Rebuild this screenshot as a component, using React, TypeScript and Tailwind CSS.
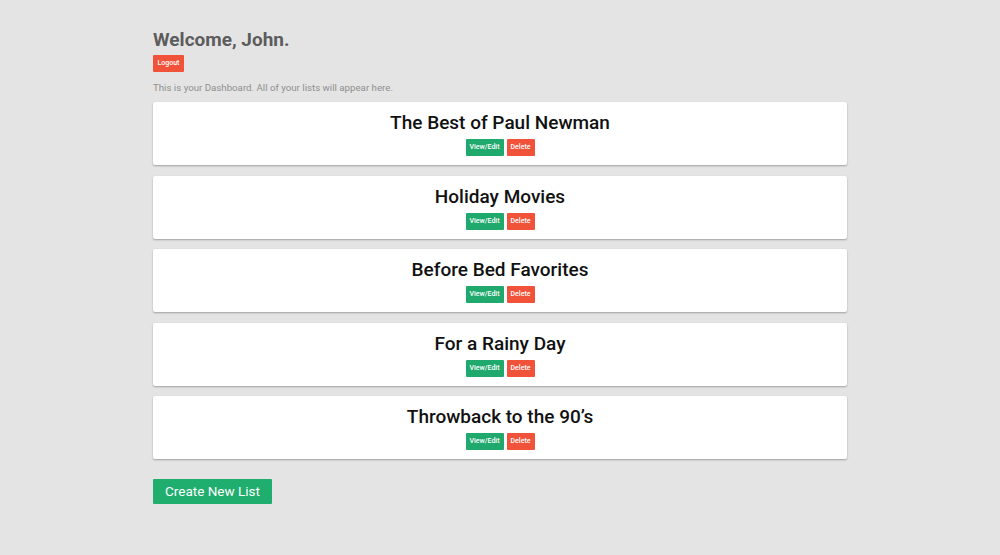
const lists = [
  "The Best of Paul Newman",
  "Holiday Movies",
  "Before Bed Favorites",
  "For a Rainy Day",
  "Throwback to the 90’s",
];

function ListCard({ title }: { title: string }) {
  return (
    <div className="bg-white rounded-[2px] shadow-[0_1px_2px_rgba(0,0,0,0.3)] pt-[8px] pb-[9px] flex flex-col items-center">
      <h2 className="text-[19px] font-medium text-[#111] leading-[26px]">{title}</h2>
      <div className="flex gap-[3px] mt-[3px]">
        <button className="h-[17px] w-[38px] bg-[#1fa96c] text-white text-[7px] font-medium rounded-[1px] flex items-center justify-center">
          View/Edit
        </button>
        <button className="h-[17px] w-[28px] bg-[#f0533a] text-white text-[7px] font-medium rounded-[1px] flex items-center justify-center">
          Delete
        </button>
      </div>
    </div>
  );
}

export default function App() {
  return (
    <div className="min-h-[555px] w-full bg-[#e4e4e4] font-['Roboto',sans-serif]">
      <div className="w-[694px] mx-auto pt-[28px]">
        <h1 className="text-[19px] font-bold text-[#5c5c5c] leading-[24px]">Welcome, John.</h1>
        <button className="mt-[3px] h-[17px] w-[31px] bg-[#f0533a] text-white text-[7px] font-medium rounded-[1px] flex items-center justify-center">
          Logout
        </button>
        <p className="mt-[9px] text-[9.7px] text-[#8f8f8f] leading-[13px]">
          This is your Dashboard. All of your lists will appear here.
        </p>
        <div className="mt-[8px] flex flex-col gap-[10.5px]">
          {lists.map((t) => (
            <ListCard key={t} title={t} />
          ))}
        </div>
        <button className="mt-[20px] h-[25px] w-[119px] bg-[#1fae6e] text-white text-[13.5px] font-normal rounded-[1px] flex items-center justify-center">
          Create New List
        </button>
      </div>
    </div>
  );
}
